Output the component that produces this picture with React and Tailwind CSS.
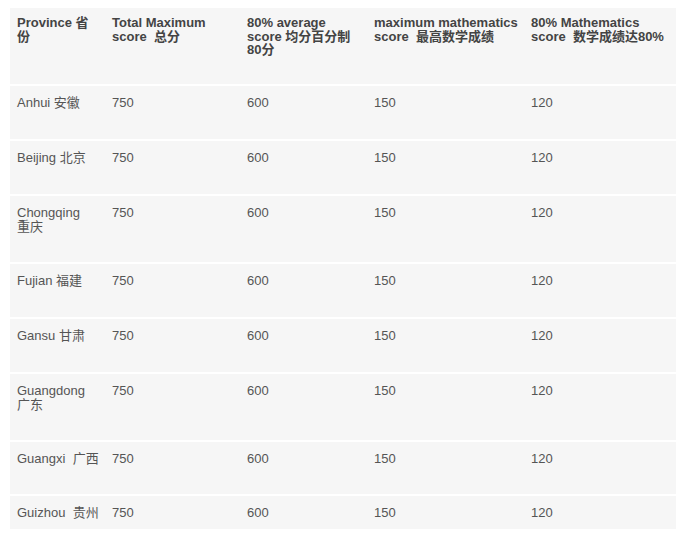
import React from 'react';

const HEADERS = [
  'Province 省份',
  'Total Maximum score  总分',
  '80% average score 均分百分制 80分',
  'maximum mathematics score  最高数学成绩',
  '80% Mathematics score  数学成绩达80%',
];

const ROWS = [
  { name: 'Anhui 安徽', h: 'h-[53px]' },
  { name: 'Beijing 北京', h: 'h-[53px]' },
  { name: 'Chongqing\n重庆', h: 'h-[66px]' },
  { name: 'Fujian 福建', h: 'h-[53px]' },
  { name: 'Gansu 甘肃', h: 'h-[53px]' },
  { name: 'Guangdong\n广东', h: 'h-[66px]' },
  { name: 'Guangxi  广西', h: 'h-[52px]' },
  { name: 'Guizhou  贵州', h: 'h-[33px]' },
];

const COLS = 'grid grid-cols-[95px_135px_127px_157px_152px]';

export default function App() {
  return (
    <div
      className="w-[686px] h-[537px] bg-white pt-[8px] pl-[10px] text-[13px] leading-[13.5px]"
      style={{ fontFamily: '"Liberation Sans", Arial, "Noto Sans CJK SC", sans-serif' }}
    >
      <div className="flex flex-col gap-[2px] w-[666px]">
        {/* header */}
        <div className={`${COLS} h-[76px] bg-[#f6f6f6] font-bold text-[#444]`}>
          {HEADERS.map(t => (
            <div key={t} className="pl-[7px] pr-[4px] pt-[8px] whitespace-pre-wrap">{t}</div>
          ))}
        </div>
        {ROWS.map(r => (
          <div key={r.name} className={`${COLS} ${r.h} bg-[#f6f6f6] text-[#555]`}>
            <div className="pl-[7px] pr-[4px] pt-[10px] whitespace-pre-wrap">{r.name}</div>
            <div className="pl-[7px] pt-[10px]">750</div>
            <div className="pl-[7px] pt-[10px]">600</div>
            <div className="pl-[7px] pt-[10px]">150</div>
            <div className="pl-[7px] pt-[10px]">120</div>
          </div>
        ))}
      </div>
    </div>
  );
}
